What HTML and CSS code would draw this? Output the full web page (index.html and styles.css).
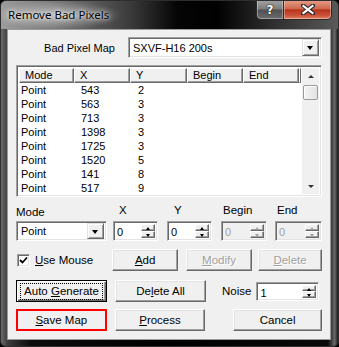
FILE: index.html
```html
<!DOCTYPE html>
<html lang="en">
<head>
  <meta charset="UTF-8">
  <title>Remove Bad Pixels</title>
  <link rel="stylesheet" href="styles.css">
</head>
<body>
  <div class="window">
    <div class="titlebar">
      <span class="title">Remove Bad Pixels</span>
      <div class="caption-buttons">
        <div class="cap-btn help">?</div>
        <div class="cap-btn close">
          <svg width="14" height="11" viewBox="0 0 14 11">
            <path d="M2 1.5 L12 9.5 M12 1.5 L2 9.5" stroke="#2b2b2b" stroke-width="4.2" stroke-linecap="square"/>
            <path d="M2.5 2 L11.5 9 M11.5 2 L2.5 9" stroke="#fff" stroke-width="2.2" stroke-linecap="square"/>
          </svg>
        </div>
      </div>
    </div>

    <div class="client">
      <div class="map-row">
        <span class="label">Bad Pixel Map</span>
        <div class="combo map-combo">
          <span class="combo-text">SXVF-H16 200s</span>
          <span class="drop-btn"></span>
        </div>
      </div>

      <div class="listview">
        <div class="list-body">
          <div class="header">
            <span class="col c-mode">Mode</span>
            <span class="col c-x">X</span>
            <span class="col c-y">Y</span>
            <span class="col c-begin">Begin</span>
            <span class="col c-end">End</span>
            <span class="col c-rest"></span>
          </div>
          <div class="rows" id="rows"></div>
        </div>
        <div class="scrollbar">
          <span class="sb-arrow up"></span>
          <span class="sb-thumb"></span>
          <span class="sb-track"></span>
          <span class="sb-arrow down"></span>
        </div>
      </div>

      <div class="edit-row">
        <div class="field f-mode">
          <span class="label">Mode</span>
          <div class="combo mode-combo">
            <span class="combo-text">Point</span>
            <span class="drop-btn"></span>
          </div>
        </div>
        <div class="field f-x">
          <span class="label">X</span>
          <div class="spin"><span class="spin-text">0</span><span class="spin-btns"><i class="s-up"></i><i class="s-down"></i></span></div>
        </div>
        <div class="field f-y">
          <span class="label">Y</span>
          <div class="spin"><span class="spin-text">0</span><span class="spin-btns"><i class="s-up"></i><i class="s-down"></i></span></div>
        </div>
        <div class="field f-begin">
          <span class="label">Begin</span>
          <div class="spin disabled"><span class="spin-text">0</span><span class="spin-btns"><i class="s-up"></i><i class="s-down"></i></span></div>
        </div>
        <div class="field f-end">
          <span class="label">End</span>
          <div class="spin disabled"><span class="spin-text">0</span><span class="spin-btns"><i class="s-up"></i><i class="s-down"></i></span></div>
        </div>
      </div>

      <div class="button-row">
        <div class="check">
          <span class="check-box">
            <svg width="9" height="9" viewBox="0 0 9 9"><path d="M1 4 L3.5 6.5 L8 1.5" fill="none" stroke="#000" stroke-width="1.8"/></svg>
          </span>
          <span><u>U</u>se Mouse</span>
        </div>
        <div class="btn b-add"><u>A</u>dd</div>
        <div class="btn b-modify disabled"><u>M</u>odify</div>
        <div class="btn b-delete disabled"><u>D</u>elete</div>
      </div>

      <div class="button-row row-gen">
        <div class="btn b-left default"><span class="focus">Auto <u>G</u>enerate</span></div>
        <div class="btn b-mid">De<u>l</u>ete All</div>
        <span class="label noise-label">Noise</span>
        <div class="spin noise"><span class="spin-text">1</span><span class="spin-btns"><i class="s-up"></i><i class="s-down"></i></span></div>
      </div>

      <div class="button-row row-save">
        <div class="btn b-left marked"><u>S</u>ave Map</div>
        <div class="btn b-mid"><u>P</u>rocess</div>
        <div class="btn b-cancel">Cancel</div>
      </div>
    </div>
  </div>

  <script>
    const pixels = [
      [543, 2], [563, 3], [713, 3], [1398, 3],
      [1725, 3], [1520, 5], [141, 8], [517, 9]
    ];

    const rows = document.getElementById("rows");
    pixels.forEach(p => {
      const row = document.createElement("div");
      row.className = "row";
      row.innerHTML = `<span class="col c-mode">Point</span><span class="col c-x">${p[0]}</span><span class="col c-y">${p[1]}</span>`;
      rows.appendChild(row);
    });
  </script>
</body>
</html>
```

FILE: styles.css
```css
body {
  margin: 0;
  padding: 0;
  background: #000;
  font-family: "Liberation Sans", Arial, sans-serif;
  font-size: 11px;
  color: #000;
}

.window {
  width: 339px;
  height: 347px;
  box-sizing: border-box;
  border: 1px solid #2e2e2e;
  border-radius: 6px;
  overflow: hidden;
  background: linear-gradient(90deg, #6a6a6a 0, #3a3a3a 7px, #0c0c0c 30px, #000 50%, #0a0a0a 97%, #6a6a6a 99%, #1a1a1a 100%);
}

/* title bar */
.titlebar {
  height: 28px;
  display: flex;
  align-items: flex-start;
  background:
    radial-gradient(ellipse 66px 14px at 56px 14px, rgba(255, 255, 255, 0.45), rgba(255, 255, 255, 0) 100%),
    linear-gradient(90deg, #9c9c9c 0, #7c7c7c 50px, #3a3a3a 130px, #060606 175px, #000 215px, #2e2e2e 270px, #5a5a5a 339px);
}

.title {
  margin: 6px 0 0 7px;
  font-family: "Noto Sans", "Open Sans", sans-serif;
  font-size: 11.5px;
  color: #000;
  text-shadow: 0 0 6px rgba(255, 255, 255, 0.9), 0 0 3px rgba(255, 255, 255, 0.8);
}

.caption-buttons {
  margin-left: auto;
  margin-right: 6px;
  margin-top: -1px;
  display: flex;
}

.cap-btn {
  height: 20px;
  box-sizing: border-box;
  border: 1px solid #2a2a2a;
  border-top: none;
  display: flex;
  justify-content: center;
  align-items: center;
  box-shadow: inset 0 0 0 1px rgba(255, 255, 255, 0.35);
}

.help {
  width: 27px;
  border-right: none;
  border-radius: 0 0 0 5px;
  background: linear-gradient(#a4a4a4, #7c7c7c 48%, #505050 52%, #6c6c6c);
  color: #fff;
  font-family: "DejaVu Sans", sans-serif;
  font-weight: bold;
  font-size: 12px;
  text-shadow: 0 0 2px #222, 0 0 1px #000;
}

.close {
  width: 49px;
  border-radius: 0 0 5px 0;
  background: linear-gradient(#e8a08a, #cf6a50 45%, #b8341a 52%, #c9503a 80%, #e08060);
}

/* client area */
.client {
  margin: 0 0 0 6px;
  width: 324px;
  height: 311px;
  box-sizing: border-box;
  border: 1px solid #9a9a9a;
  background: #f0f0f0;
  padding: 0 8px 0 8px;
}

.label {
  white-space: nowrap;
}

.map-row {
  display: flex;
  justify-content: flex-end;
  align-items: center;
  gap: 13px;
  padding-top: 7px;
}

/* combo boxes */
.combo {
  height: 21px;
  box-sizing: border-box;
  background: #fff;
  border: 1px solid;
  border-color: #a0a0a0 #fff #fff #a0a0a0;
  box-shadow: inset 1px 1px #696969, inset -1px -1px #e3e3e3;
  display: flex;
  align-items: center;
  padding: 2px;
}

.map-combo {
  width: 194px;
}

.combo-text {
  flex: 1;
  padding-left: 2px;
}

.drop-btn {
  width: 17px;
  height: 17px;
  box-sizing: border-box;
  background: #f0f0f0;
  border: 1px solid;
  border-color: #e3e3e3 #696969 #696969 #e3e3e3;
  box-shadow: inset 1px 1px #fff, inset -1px -1px #a0a0a0;
  position: relative;
}

.drop-btn::after {
  content: "";
  position: absolute;
  left: 4px;
  top: 6px;
  border-left: 3.5px solid transparent;
  border-right: 3.5px solid transparent;
  border-top: 4px solid #000;
}

/* list view */
.listview {
  margin-top: 7px;
  width: 306px;
  height: 132px;
  box-sizing: border-box;
  border: 1px solid;
  border-color: #a0a0a0 #fff #fff #a0a0a0;
  box-shadow: inset 1px 1px #696969, inset -1px -1px #e3e3e3;
  background: #fff;
  padding: 2px;
  display: flex;
}

.list-body {
  flex: 1;
  overflow: hidden;
}

.header {
  display: flex;
  height: 15px;
}

.header .col {
  box-sizing: border-box;
  height: 15px;
  line-height: 13px;
  padding-left: 5px;
  background: #f0f0f0;
  border: 1px solid;
  border-color: #fff #696969 #696969 #fff;
  box-shadow: inset -1px -1px #a0a0a0;
}

.header .c-rest {
  flex: 1;
  padding: 0;
}

.col {
  display: block;
  white-space: nowrap;
}

.c-mode { width: 56px; }
.c-x { width: 57px; }
.c-y { width: 58px; }
.c-begin { width: 57px; }
.c-end { width: 57px; }

.row {
  display: flex;
  height: 14px;
  line-height: 14px;
}

.row .col {
  padding-left: 6px;
  box-sizing: border-box;
}

.row .c-mode {
  padding-left: 2px;
}

.scrollbar {
  width: 17px;
  display: flex;
  flex-direction: column;
  background: #f0f0f0;
  margin-left: 1px;
}

.sb-arrow {
  height: 17px;
  position: relative;
}

.sb-arrow::after {
  content: "";
  position: absolute;
  left: 6px;
  border-left: 3px solid transparent;
  border-right: 3px solid transparent;
}

.sb-arrow.up::after {
  top: 7px;
  border-bottom: 3px solid #333;
}

.sb-arrow.down::after {
  top: 8px;
  border-top: 3px solid #333;
}

.sb-thumb {
  height: 15px;
  margin: 0 1px;
  box-sizing: border-box;
  background: linear-gradient(90deg, #f4f4f4, #e2e2e2);
  border: 1px solid #9a9a9a;
  border-radius: 2px;
  box-shadow: inset 1px 1px #fff;
}

.sb-track {
  flex: 1;
}

/* edit row */
.edit-row {
  display: flex;
  margin-top: 6px;
}

.field {
  display: flex;
  flex-direction: column;
}

.field .label {
  height: 14px;
  line-height: 14px;
  margin-bottom: 4px;
  font-size: 11.5px;
}

.f-mode { width: 91px; }
.f-mode .label { margin-top: 2px; margin-bottom: 2px; }
.f-x { width: 45px; margin-left: 6px; }
.f-x .label { padding-left: 6px; }
.f-y { width: 45px; margin-left: 9px; }
.f-y .label { padding-left: 7px; }
.f-begin { width: 46px; margin-left: 9px; }
.f-begin .label { padding-left: 2px; }
.f-end { width: 47px; margin-left: 8px; }
.f-end .label { padding-left: 2px; }

.mode-combo {
  height: 20px;
}

.mode-combo .drop-btn {
  height: 16px;
}

/* spin edits */
.spin {
  height: 20px;
  box-sizing: border-box;
  background: #fff;
  border: 1px solid;
  border-color: #a0a0a0 #fff #fff #a0a0a0;
  box-shadow: inset 1px 1px #696969, inset -1px -1px #e3e3e3;
  display: flex;
  padding: 2px;
}

.spin.disabled {
  background: #f0f0f0;
  color: #a0a0a0;
}

.spin-text {
  flex: 1;
  line-height: 16px;
  padding-left: 1px;
}

.spin-btns {
  width: 14px;
  display: flex;
  flex-direction: column;
}

.spin-btns i {
  flex: 1;
  box-sizing: border-box;
  background: #f0f0f0;
  border: 1px solid;
  border-color: #fff #696969 #696969 #fff;
  box-shadow: inset -1px -1px #a0a0a0;
  position: relative;
}

.spin-btns i::after {
  content: "";
  position: absolute;
  left: 4px;
  border-left: 2.5px solid transparent;
  border-right: 2.5px solid transparent;
}

.s-up::after {
  top: 2px;
  border-bottom: 3px solid #000;
}

.s-down::after {
  top: 2px;
  border-top: 3px solid #000;
}

.spin.disabled .s-up::after { border-bottom-color: #a0a0a0; }
.spin.disabled .s-down::after { border-top-color: #a0a0a0; }

/* buttons */
.button-row {
  display: flex;
  align-items: center;
  margin-top: 8px;
  height: 22px;
}

.row-gen {
  margin-top: 9px;
}

.row-save {
  margin-top: 7px;
}

.btn {
  height: 22px;
  box-sizing: border-box;
  background: #f0f0f0;
  border: 1px solid;
  border-color: #fff #696969 #696969 #fff;
  box-shadow: inset -1px -1px #a0a0a0, inset 1px 1px #e3e3e3;
  display: flex;
  justify-content: center;
  align-items: center;
  font-size: 11.5px;
  white-space: nowrap;
}

.btn.disabled {
  color: #a0a0a0;
  text-shadow: 1px 1px #fff;
}

.btn.default {
  border: 1px solid #000;
  box-shadow: inset 1px 1px #fff, inset -1px -1px #696969, inset -2px -2px #a0a0a0;
}

.focus {
  border: 1px dotted #000;
  padding: 1px 3px;
  line-height: 13px;
}

.btn.marked {
  border: 2px solid #ff0000;
  box-shadow: none;
}

.check {
  display: flex;
  align-items: center;
  gap: 5px;
  width: 90px;
  padding-left: 1px;
  font-size: 11.5px;
}

.check-box {
  width: 13px;
  height: 13px;
  box-sizing: border-box;
  background: #fff;
  border: 1px solid;
  border-color: #a0a0a0 #fff #fff #a0a0a0;
  box-shadow: inset 1px 1px #696969, inset -1px -1px #e3e3e3;
  display: flex;
  justify-content: center;
  align-items: center;
}

.b-add { width: 68px; margin-left: 8px; }
.b-modify { width: 68px; margin-left: 8px; }
.b-delete { width: 66px; margin-left: 6px; }

.b-left { width: 91px; }
.b-mid { width: 91px; margin-left: 8px; }
.b-cancel { width: 89px; margin-left: 28px; }

.noise-label {
  margin-left: 16px;
  font-size: 11.5px;
}

.noise {
  width: 63px;
  height: 19px;
  margin-left: 5px;
}
```
